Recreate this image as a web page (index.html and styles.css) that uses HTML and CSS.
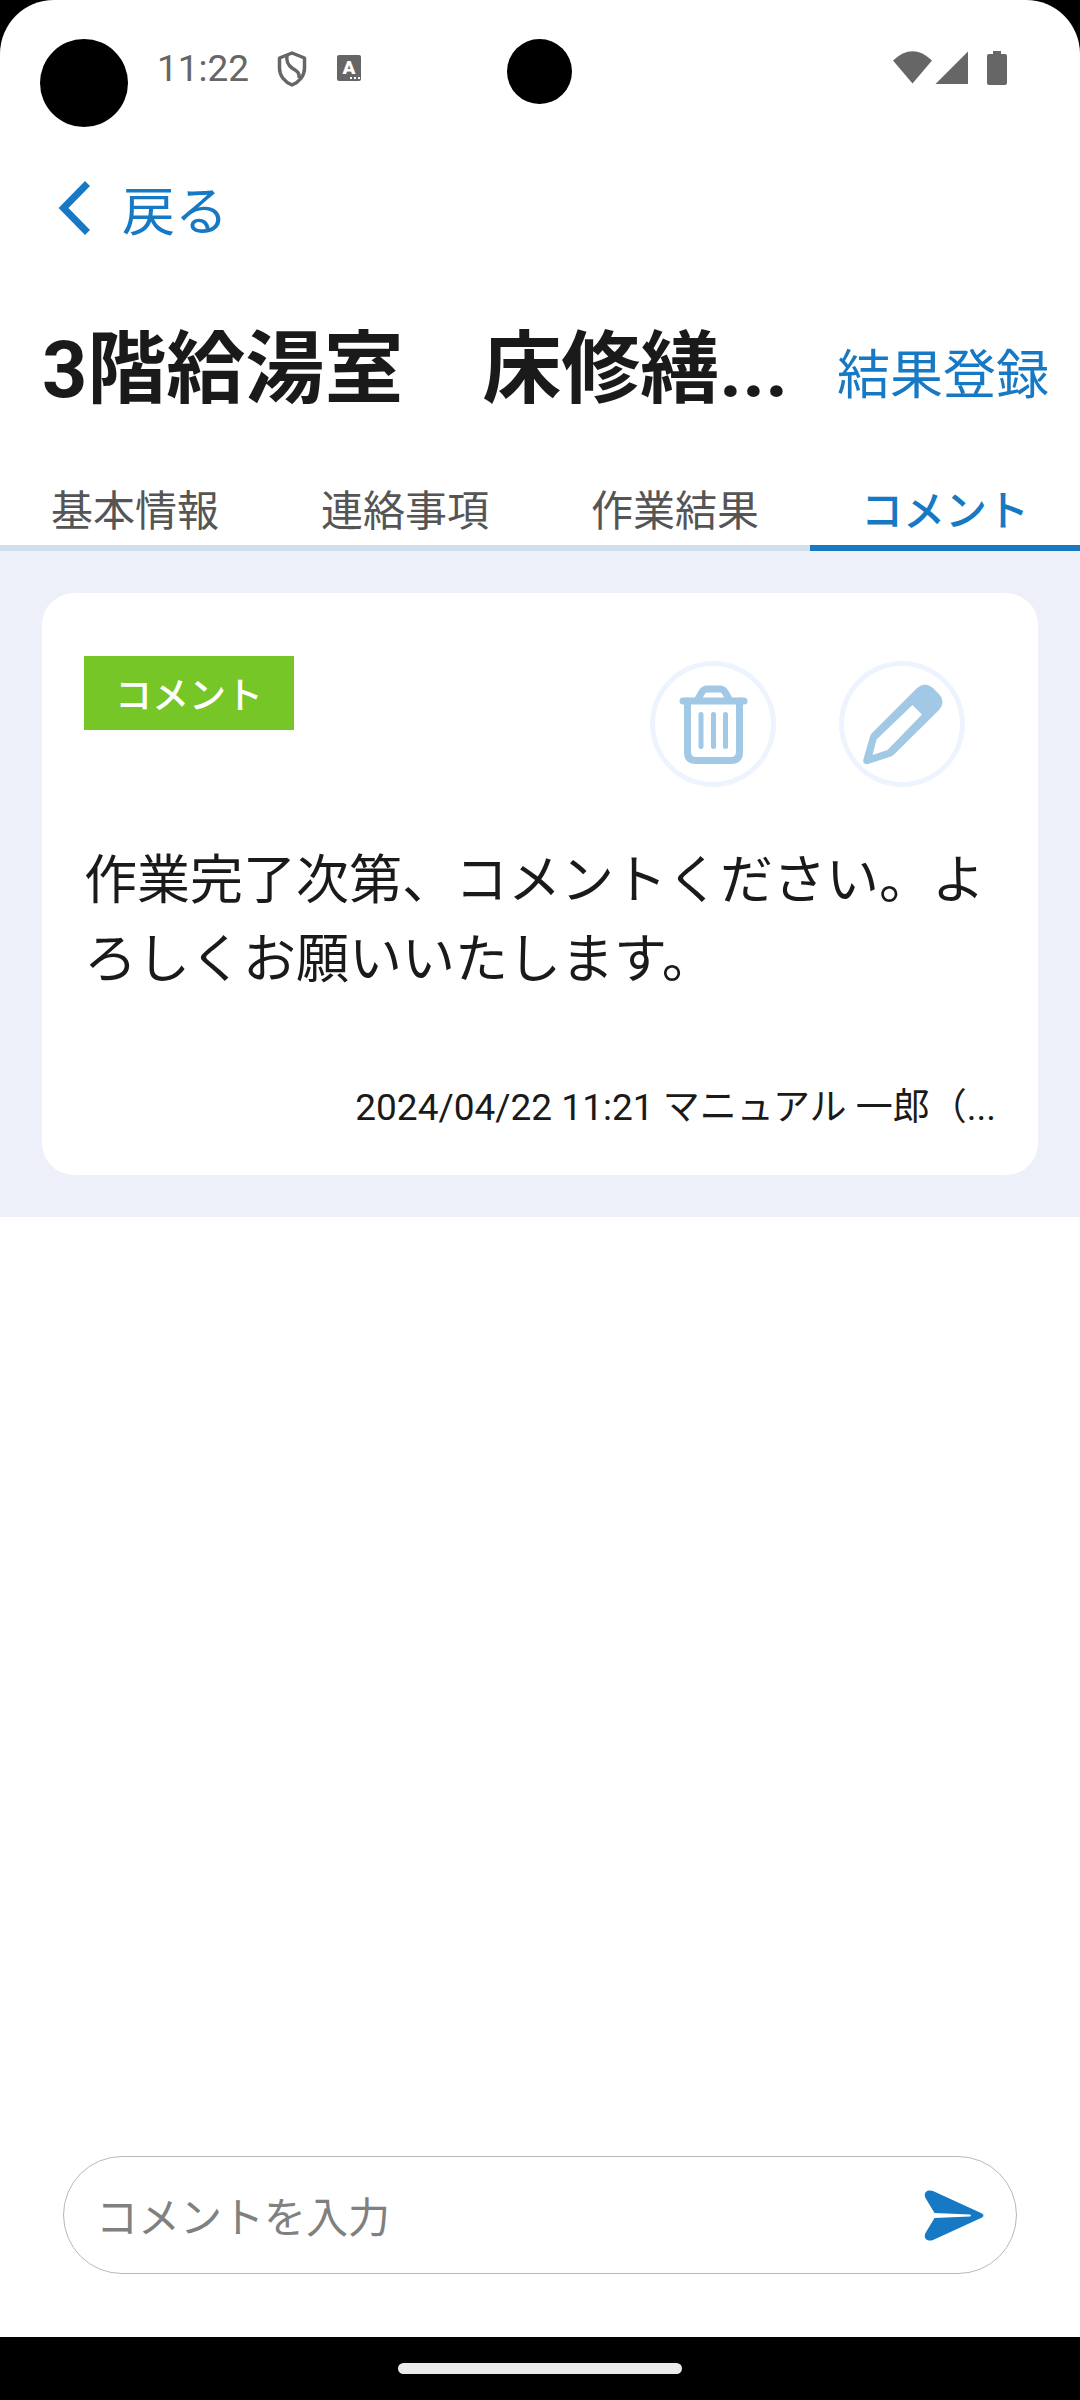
FILE: index.html
```html
<!DOCTYPE html>
<html lang="ja">
<head>
<meta charset="utf-8">
<meta name="viewport" content="width=device-width, initial-scale=1">
<title>コメント</title>
<link rel="stylesheet" href="styles.css">
</head>
<body>
<div class="screen">
  <div class="status-bar">
    <span class="lens"></span>
    <span class="clock">11:22</span>
    <svg class="shield" width="30" height="36" viewBox="0 0 30 36" fill="none" stroke="#666" stroke-width="3.500" stroke-linejoin="round">
      <path d="M15 2 L27.500 7 V17 C27.500 25 22 31 15 34 C8 31 2.500 25 2.500 17 V7 Z"/>
      <path d="M10 4 C9 11 11 14 15 17 C20 20 23 22 22 27"/>
    </svg>
    <svg class="ime" width="24" height="26" viewBox="0 0 24 26">
      <rect width="24" height="26" rx="2" fill="#666"/>
      <text class="ime-letter" x="12" y="19" text-anchor="middle">A</text>
      <path d="M13 22h2v2h-2zM17 22h2v2h-2zM21 22h2v2h-2z" fill="#fff"/>
    </svg>
    <span class="camera"></span>
    <svg class="signals" width="115" height="35" viewBox="0 0 115 35" fill="#666">
      <path d="M0 9.500 Q19.500 -9 39 9.500 L19.500 32.500 Z"/>
      <path d="M75 0.500 V33 H42.500 Z"/>
      <path d="M100 0h8v3h4q2 0 2 2v27q0 2-2 2h-16q-2 0-2-2v-27q0-2 2-2h4z"/>
    </svg>
  </div>

  <header class="header">
    <a class="back" href="#">
      <svg width="32" height="54" viewBox="0 0 32 54" fill="none" stroke="#1779c4" stroke-width="7"><path d="M29.500 2.500 L5.500 27 L29.500 51.500"/></svg>
      <span class="back-label">戻る</span>
    </a>
    <div class="title-row">
      <h1 class="title">3階給湯室　床修繕...</h1>
      <a class="register" href="#">結果登録</a>
    </div>
  </header>

  <nav class="tabs">
    <a class="tab" href="#">基本情報</a>
    <a class="tab" href="#">連絡事項</a>
    <a class="tab" href="#">作業結果</a>
    <a class="tab tab-active" href="#" aria-current="page">コメント</a>
  </nav>

  <main class="comments">
    <article class="card">
      <div class="card-head">
        <span class="badge">コメント</span>
        <div class="actions">
          <button class="round" type="button" aria-label="削除">
            <svg width="126" height="126" viewBox="0 0 126 126" fill="none" stroke="#a1c8e5" stroke-width="7" stroke-linecap="round" stroke-linejoin="round">
              <path d="M33 40 H94"/>
              <path d="M48 38 L52 31 Q54 28 57 28 H70 Q73 28 75 31 L79 38"/>
              <path d="M37.500 40 V91 Q37.500 99.500 46 99.500 H81 Q89.500 99.500 89.500 91 V40"/>
              <path d="M51 53.500 V85.500 M63.500 53.500 V85.500 M75.500 53.500 V85.500" stroke-width="5"/>
            </svg>
          </button>
          <button class="round" type="button" aria-label="編集">
            <svg width="126" height="126" viewBox="0 0 126 126" fill="#a1c8e5" fill-rule="evenodd">
              <path d="M31 75.500 Q31.500 73.500 33 72 L78 27 Q86 20 94 27 L100 33 Q107 41 100 49 L55 93.500 Q53.500 95 52 95.500 L29 103 Q23 104 24.500 98 Z M73.500 44 L37.500 78.500 L33.500 94 L48.500 89 L83 53.500 Z"/>
            </svg>
          </button>
        </div>
      </div>
      <p class="body-text">作業完了次第、コメントください。よろしくお願いいたします。</p>
      <p class="meta">2024/04/22 11:21 マニュアル 一郎（...</p>
    </article>
  </main>

  <form class="composer">
    <input class="composer-input" type="text" placeholder="コメントを入力" aria-label="コメントを入力">
    <button class="send" type="submit" aria-label="送信">
      <svg width="60" height="51" viewBox="0 0 60 51" fill="#1779c4">
        <path d="M10.500 23 L1.500 8 C-1 3 3 -1 9 1 L57 23 Q62 25.500 57 28 L9 50 C3 52 -1 48 1.500 43 L10.500 28 L46 26.500 Q48 25.500 46 24.500 Z"/>
      </svg>
    </button>
  </form>
</div>
<footer class="nav-bar"><span class="pill"></span></footer>
</body>
</html>
```
FILE: styles.css
```css
* {
  box-sizing: border-box;
}

body {
  margin: 0;
  min-height: 100vh;
  display: flex;
  flex-direction: column;
  background: #000;
  color: #1a1a1a;
  font-family: Roboto, "Noto Sans CJK JP", sans-serif;
}

a {
  color: #1779c4;
  text-decoration: none;
}

svg {
  display: block;
  flex: none;
}

button {
  padding: 0;
  border: 0;
  background: none;
}

.screen {
  flex: 1;
  display: flex;
  flex-direction: column;
  background: #fff;
  border-radius: 54px 54px 0 0;
}

/* Status bar */
.status-bar {
  position: relative;
  display: flex;
  align-items: flex-start;
  height: 168px;
  padding: 39px 72px 0 40px;
}

.lens {
  width: 88px;
  height: 88px;
  border-radius: 50%;
  background: #000;
}

.clock {
  margin-left: 29px;
  font-size: 37px;
  line-height: 60px;
  color: #666;
}

.shield {
  margin: 12px 0 0 28px;
}

.ime {
  margin: 16px 0 0 30px;
}

.ime-letter {
  font-size: 19px;
  font-weight: 900;
  fill: #fff;
}

.camera {
  position: absolute;
  left: 50%;
  top: 39px;
  width: 65px;
  height: 65px;
  margin-left: -33px;
  border-radius: 50%;
  background: #000;
}

.signals {
  margin: 12px 0 0 auto;
}

/* Header */
.header {
  padding: 0 31px 0 42px;
}

.back {
  display: inline-flex;
  align-items: center;
  gap: 32px;
  height: 80px;
  padding-left: 16px;
  font-size: 53px;
  line-height: 56px;
}

.back-label {
  padding-top: 10px;
}

.title-row {
  display: flex;
  align-items: flex-end;
  justify-content: space-between;
  margin-top: 62px;
}

.title {
  margin: 0;
  font-size: 79px;
  line-height: 120px;
  font-weight: 700;
  white-space: nowrap;
}

.register {
  font-size: 53px;
  line-height: 108px;
  white-space: nowrap;
}

/* Tabs */
.tabs {
  display: grid;
  grid-template-columns: repeat(4, 1fr);
  margin-top: 42px;
}

.tab {
  padding-top: 6px;
  border-bottom: 6px solid #cfdfec;
  font-size: 42px;
  line-height: 67px;
  text-align: center;
  color: #555;
}

.tab-active {
  border-color: #1779c4;
  color: #1779c4;
  font-weight: 500;
}

/* Comment list */
.comments {
  padding: 42px;
  background: #edf0f9;
}

.card {
  padding: 63px 42px 39px;
  border-radius: 32px;
  background: #fff;
}

.card-head {
  display: flex;
  align-items: flex-start;
  justify-content: space-between;
}

.badge {
  padding: 8px 31px 0;
  background: #75c626;
  color: #fff;
  font-size: 37px;
  font-weight: 500;
  line-height: 66px;
}

.actions {
  display: flex;
  gap: 63px;
  padding: 5px 31px 0 0;
}

.round {
  width: 126px;
  height: 126px;
  border-radius: 50%;
  box-shadow: inset 0 0 0 5px #edf4fd;
}

.body-text {
  margin: 55px 0 0;
  font-size: 53px;
  line-height: 79px;
}

.meta {
  margin: 80px 0 0;
  font-size: 37px;
  line-height: 56px;
  text-align: right;
}

/* Comment input */
.composer {
  display: flex;
  align-items: center;
  height: 118px;
  margin: auto 63px 63px;
  padding: 0 32px;
  border: 1px solid #b8b8b8;
  border-radius: 59px;
}

.composer-input {
  flex: 1;
  min-width: 0;
  padding: 8px 0 0;
  border: 0;
  outline: 0;
  background: none;
  font: inherit;
  font-size: 42px;
  line-height: 64px;
}

.composer-input::placeholder {
  color: #808080;
}

/* System navigation */
.nav-bar {
  display: flex;
  justify-content: center;
  height: 63px;
  padding-top: 26px;
}

.pill {
  width: 284px;
  height: 11px;
  border-radius: 6px;
  background: #ebebeb;
}
```
